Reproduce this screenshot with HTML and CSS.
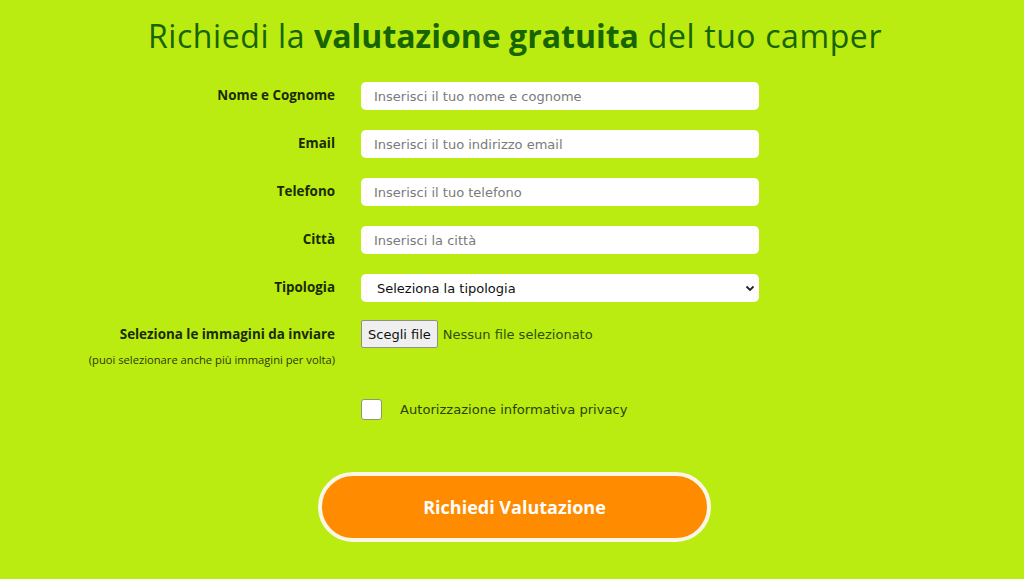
FILE: index.html
```html
<!DOCTYPE html>
<html lang="it">
<head>
<meta charset="utf-8">
<title>Richiedi la valutazione gratuita</title>
<link rel="stylesheet" href="styles.css">
</head>
<body>
<main class="page">
  <h1 class="title">Richiedi la <strong>valutazione gratuita</strong> del tuo camper</h1>
  <form class="form">
    <label class="label" for="nome">Nome e Cognome</label>
    <input class="field" id="nome" type="text" placeholder="Inserisci il tuo nome e cognome">

    <label class="label" for="email">Email</label>
    <input class="field" id="email" type="email" placeholder="Inserisci il tuo indirizzo email">

    <label class="label" for="tel">Telefono</label>
    <input class="field" id="tel" type="tel" placeholder="Inserisci il tuo telefono">

    <label class="label" for="citta">Città</label>
    <input class="field" id="citta" type="text" placeholder="Inserisci la città">

    <label class="label" for="tipo">Tipologia</label>
    <div class="select-wrap">
      <select class="field select" id="tipo">
        <option>Seleziona la tipologia</option>
      </select>
      <svg class="chev" width="10" height="8" viewBox="0 0 10 8"><path d="M1.5 2.5 L5 6 L8.5 2.5" fill="none" stroke="#222" stroke-width="1.8"/></svg>
    </div>

    <div class="label label-file">
      <span>Seleziona le immagini da inviare</span>
      <small class="hint">(puoi selezionare anche più immagini per volta)</small>
    </div>
    <div class="file">
      <span class="file-btn">Scegli file</span>
      <span class="file-none">Nessun file selezionato</span>
    </div>

    <span></span>
    <label class="privacy">
      <span class="box"></span>
      <span class="privacy-text">Autorizzazione informativa privacy</span>
    </label>
  </form>
  <div class="actions">
    <button class="submit" type="button">Richiedi Valutazione</button>
  </div>
</main>
</body>
</html>
```
FILE: styles.css
```css
html, body {
  margin: 0;
  padding: 0;
  background: #bbec12;
}
.page {
  width: 1024px;
  height: 579px;
  overflow: hidden;
  font-family: "Open Sans", "DejaVu Sans", sans-serif;
}
.title {
  margin: 0;
  padding: 14px 0 0 6px;
  text-align: center;
  font-family: "Open Sans", sans-serif;
  font-weight: 400;
  font-size: 32px;
  line-height: 44px;
  color: #176500;
  letter-spacing: 0.6px;
}
.title strong {
  font-weight: 700;
  letter-spacing: 0;
}
.form {
  display: grid;
  grid-template-columns: 335px 398px;
  column-gap: 26px;
  row-gap: 20px;
  margin-top: 24px;
  align-items: start;
}
.label {
  text-align: right;
  font-family: "Open Sans", sans-serif;
  font-weight: 700;
  font-size: 13.4px;
  line-height: 26px;
  color: #1a2b00;
}
.field {
  box-sizing: border-box;
  width: 398px;
  height: 28px;
  border: none;
  border-radius: 5px;
  background: #fff;
  padding: 0 13px;
  font-family: "DejaVu Sans", sans-serif;
  font-size: 13px;
  color: #222;
  outline: none;
}
.field::placeholder {
  color: #7a7a7a;
}
.select-wrap {
  position: relative;
  width: 398px;
  height: 28px;
}
.select {
  appearance: none;
  -webkit-appearance: none;
  padding-left: 16px;
  color: #111;
}
.chev {
  position: absolute;
  right: 4px;
  top: 10px;
  pointer-events: none;
}
.label-file {
  display: flex;
  flex-direction: column;
  align-items: flex-end;
  margin-top: -1px;
}
.hint {
  font-weight: 400;
  font-size: 11.2px;
  line-height: 14px;
  margin-top: 6px;
  color: #2a3a00;
}
.file {
  display: flex;
  align-items: center;
  gap: 5px;
  margin-top: -2px;
}
.file-btn {
  box-sizing: border-box;
  height: 28px;
  padding: 0 6px;
  display: flex;
  align-items: center;
  background: #efefef;
  border: 1px solid #8f8f8f;
  border-radius: 2px;
  font-family: "DejaVu Sans", sans-serif;
  font-size: 13px;
  color: #111;
}
.file-none {
  font-family: "DejaVu Sans", sans-serif;
  font-size: 13px;
  color: #2c5200;
}
.privacy {
  display: flex;
  align-items: center;
  gap: 18px;
  margin-top: 12px;
}
.box {
  box-sizing: border-box;
  width: 21px;
  height: 21px;
  background: #fff;
  border: 1px solid #8a9a6a;
  border-radius: 3px;
}
.privacy-text {
  font-family: "DejaVu Sans", sans-serif;
  font-size: 13.1px;
  color: #2a4400;
}
.actions {
  display: flex;
  justify-content: flex-start;
  padding-left: 318px;
  margin-top: 52px;
}
.submit {
  box-sizing: border-box;
  width: 393px;
  height: 70px;
  border: 4px solid #fbf6e6;
  border-radius: 35px;
  background: #ff8b00;
  color: #fff;
  font-family: "Open Sans", sans-serif;
  font-weight: 700;
  font-size: 18px;
  cursor: pointer;
}
```
